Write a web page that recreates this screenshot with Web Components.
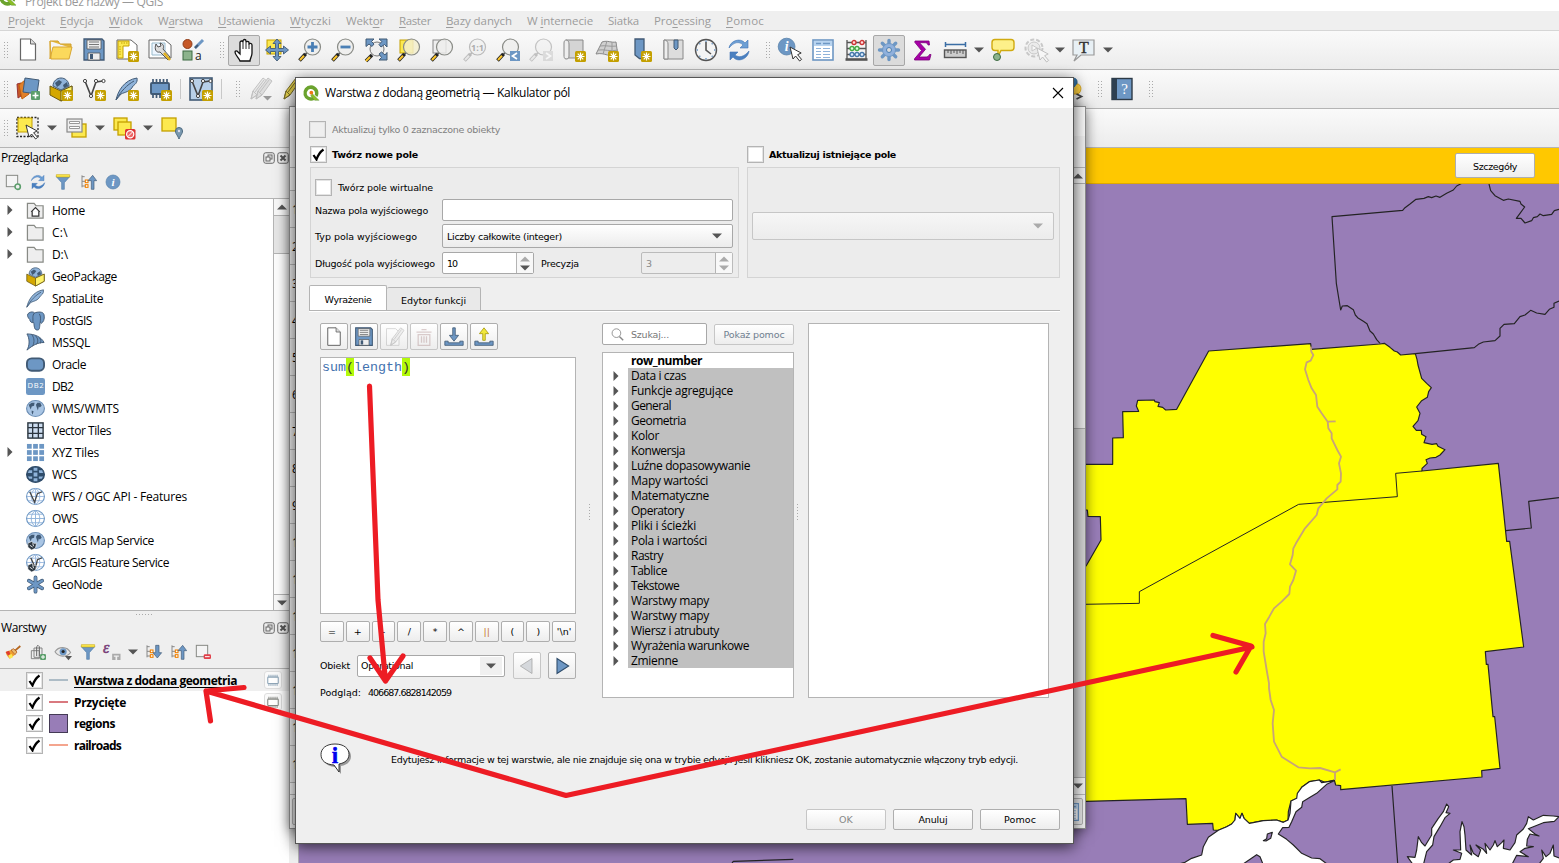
<!DOCTYPE html>
<html lang="pl">
<head>
<meta charset="utf-8">
<title>QGIS</title>
<style>
html,body{margin:0;height:100%;overflow:hidden;background:#efefef}
body{font:12px "Open Sans","Noto Sans",sans-serif;color:#000}
</style>
</head>
<body>
<qgis-app></qgis-app>
<script>
const B='#6d97c4', D='#415a75', Y='#fce94f', G='#c4a000', K='#555753';
const star=`<rect x="13" y="13" width="11" height="11" rx="1.5" fill="#c4a000"/><path d="M18.500 14.500v8M14.500 18.500h8M15.700 15.700l5.600 5.600M21.300 15.700l-5.600 5.600" stroke="#fff" stroke-width="1.200"/>`;
const mag=(inner='',c='#555753',h='#fcc62c')=>`<path d="M9 14.500l-2 2.500" stroke="${c}" stroke-width="2"/><path d="M7.500 16L1.500 22.500" stroke="${c==='#555753'?'#222':c}" stroke-width="3.600"/><path d="M6 17.800L2 22" stroke="${h}" stroke-width="2"/><circle cx="14.500" cy="9" r="8" fill="#eeeeecd0" stroke="${c==='#555753'?'#888a85':c}" stroke-width="1.200"/>${inner}`;
const globe=(f,s)=>`<ellipse cx="10" cy="10" rx="9.400" ry="8.400" fill="${f}" stroke="${s}" stroke-width="1.200"/>`;
const grat=(s,w=1)=>`<path d="M1 10h18M2.500 5.500h15M2.500 14.500h15M10 1.500v17M10 1.500c-6 4-6 13 0 17M10 1.500c6 4 6 13 0 17" fill="none" stroke="${s}" stroke-width="${w}"/>`;
const land=`<path d="M3 6l3-2 3 0-.5 3-2.500 1-1 3-1.500-3zM12 4l3 0 1.500 3-2 2-1-1-1 4-1.500-4-.5-2zM6 12l2 1-1 3.500-1-2z" fill="#415a75"/>`;
const box=`<path d="M1 9l11 5 11-5v9l-11 6-11-6z" fill="#d4a700" stroke="#6b5a14"/><path d="M12 14l11-5v9l-11 6z" fill="#fff36b" stroke="#6b5a14"/><path d="M4 9C4 4 8 1 12 1s8 3 8 8l-8 4z" fill="#8fb3da" stroke="#415a75"/><path d="M6 6l4-3 3 2-2 3-3 2zM14 8l4-3 1 4-4 2z" fill="#415a75"/>`;
const feather=`<path d="M1 23C3 14 9 3 22 1c1 5-3 7-4 8-3 6-8 6-12 8-2 2-3 4-5 6z" fill="#8fb3da" stroke="#415a75"/><path d="M1 23C6 14 12 8 19 4" fill="none" stroke="#415a75"/>`;
const cursor=(x,y,c='#333')=>`<path transform="translate(${x} ${y})" d="M0 0l3 12 2.600-3 4 5 2-1.600-4-4.700 3.600-1.700z" fill="#fff" stroke="${c}"/>`;
const vee=`<path d="M3 4l6 15 5-14 7-1" fill="none" stroke="#444" stroke-width="1.600"/><g fill="#fff" stroke="#444"><circle cx="3" cy="4" r="1.600"/><circle cx="9" cy="19" r="1.600"/><circle cx="14" cy="4" r="1.600"/><circle cx="21.500" cy="4" r="1.600"/></g>`;
const folder=`<path d="M1.500 2.500h7l2 2.500h7.500v13h-16.500z" fill="#eee" stroke="#888a85" stroke-width="1.300"/>`;
const cyc=`<path d="M2 10C3 3 13-1 18 5l3-3v8h-8l3-3C12 3 7 4 2 10z" fill="#6d9fd4" stroke="#3f73b5" stroke-width=".6"/><path d="M22 13C21 21 11 25 6 19l-3 3v-8h8l-3 3c4 3 9 2 14-4z" fill="#4a80c0" stroke="#3f73b5" stroke-width=".6"/>`;
const pen=(c,d)=>`<path d="M3 22l2-8L15 1l4 3L9 18z" fill="${c}" stroke="${d}"/><path d="M3 22l2-8 4 4zM7 15L16 3" fill="none" stroke="${d}"/>`;
const tree=`<path d="M3 2v18M3 4h4M3 18h5M3 11h5" stroke="#888" stroke-width="1.500" fill="none"/><g fill="#fff" stroke="#f08000" stroke-width="1.600"><rect x="8" y="9" width="4" height="4"/><rect x="8" y="16" width="4" height="4"/></g>`;
const disk=`<path d="M2 1h18l2 2v19H2z" fill="#6d97c4" stroke="#415a75" stroke-width="1.300"/><path d="M5 2h14v9H5zM6 15h12v7H6z" fill="#eee" stroke="#555" stroke-width=".8"/><path d="M7 4h10M7 6.500h10M7 9h10" stroke="#777"/><rect x="8" y="16" width="3" height="5" fill="#415a75"/>`;
const page=`<path d="M4.500 1h10l5 5v16H4.500z" fill="#fff" stroke="#666" stroke-width="1.200"/><path d="M14.500 1v5h5" fill="#ddd" stroke="#666"/>`;
const funnel=`<path d="M2 4h20l-8 9v10h-4V13z" fill="#6d97c4" stroke="#5580aa"/><path d="M2 1h20v3.500H2z" fill="#fce94f" stroke="#c4a000" stroke-width=".8"/>`;
const chip=(c,f)=>`<rect x="3" y="7" width="18" height="11" rx="1" fill="${f}" stroke="${c}" stroke-width="1.900"/><path d="M5 3v4M8.500 3v4M12 3v4M15.500 3v4M19 3v4M5 18v4M8.500 18v4M12 18v4M15.500 18v4M19 18v4" stroke="${c}" stroke-width="1.700"/>`;
const info=`<circle cx="12" cy="12" r="10.500" fill="#6d97c4" stroke="#5580aa"/><text x="12" y="18" font-size="17" font-style="italic" font-weight="bold" fill="#fff" text-anchor="middle" font-family="Liberation Serif,serif">i</text>`;
const arcs=`<path d="M2 13l4-2 2 2 3 0-1 5-4 2-4-3z" fill="#2c3640" stroke="#fff" stroke-width=".6"/><path d="M4 15l3 2M7 13l1 3" stroke="#fff" stroke-width=".9"/>`;
const I={
new:page, open:`<path d="M1 3h8l2 3h11v4" fill="#e5b83c" stroke="#d09f2c"/><path d="M1 3v18l3-12h19l-3 12H2z" fill="#fbd95c" stroke="#d8a632"/>`,
save:disk,
layout:`<path d="M2 2h14l6 5v14H2z" fill="#fff" stroke="#666"/><path d="M3 3h11v5H8v12H3z" fill="#fce94f" stroke="#c4a000"/><path d="M6 5h7M5 8v10" stroke="#c4a000" stroke-dasharray="1.500 1"/>${star}`,
layman:`<path d="M1 2h16l6 5v13H1z" fill="#fff" stroke="#666"/><path d="M4 5h13v12H4z" fill="#eef6ff" stroke="#9bc"/><path d="M8 6l2 3 3-1-1-3c4 1 4 4 3 6l7 8-2 3-8-8c-4 1-6-3-4-8z" fill="#ddd" stroke="#444" stroke-width=".9"/><path d="M16 15l6 7" stroke="#e0b020" stroke-width="2.600"/>`,
style:`<circle cx="6.500" cy="6" r="4.500" fill="#c65827" stroke="#8f3c18"/><path d="M14 10l8-8" stroke="#6d97c4" stroke-width="3"/><path d="M14 10l3-3" stroke="#415a75" stroke-width="2"/><rect x="2" y="13" width="9" height="9" fill="#8cb38c" stroke="#3d6b42"/><text x="14" y="21.500" font-size="12" fill="#222" font-family="Open Sans,sans-serif">a</text>`,
hand:`<path d="M8 23c-1-3-5-6-5-9 0-1.500 2-1.500 3 0l2 2V4.500C8 2.500 11 2.500 11 4.500V3c0-2 3-2 3 0v1.500c0-1.500 3-1.500 3 0V6.500c0-1.500 3-1.500 3 .500v8c0 4-2 5-2 8z" fill="#fff" stroke="#111" stroke-width="1.300"/><path d="M11 4.500V11M14 4.500V11M17 6V11" stroke="#111" stroke-width=".9"/>`,
pansel:`<rect x="2" y="2" width="14" height="14" fill="${Y}" stroke="${G}"/><path d="M12 1l4 4.500h-2.500v5h5V8l5 4-5 4v-2.500h-5v5H16L12 23l-4-4.500h2.500v-5h-5V16l-5-4 5-4v2.500h5v-5H8z" fill="${B}" stroke="${D}" stroke-width=".9"/>`,
zin:mag(`<path d="M14.500 4v10M9.500 9h10" stroke="#4a7fb5" stroke-width="2.800"/>`),
zout:mag(`<path d="M9.500 9h10" stroke="#4a7fb5" stroke-width="2.800"/>`),
zfull:`<circle cx="13" cy="11" r="7" fill="#eee" stroke="#777"/><path d="M8 17l-6 6" stroke="#222" stroke-width="3.500"/><path d="M6 19l-4 4" stroke="#fcc62c" stroke-width="2"/><path d="M2 1h8L7.500 3.500 10 6 8 8.500 5 6 2 8.500zM23 1v8l-2.500-2.500L17 9l-2-2.500L18 3.500 15 1zM23 22h-8l2.500-2.500L15 16l2.500-2L21 17l2-2.500z" fill="${B}" stroke="${D}"/>`,
zsel:`<rect x="3" y="2" width="13" height="13" fill="${Y}" stroke="${G}"/>`+mag('').replace('#eeeeecd0','#f3efccd8'),
zlay:`<rect x="3" y="2" width="13" height="13" fill="#eee" stroke="#888"/>`+mag(),
z11:`<g opacity=".45">${mag(`<text x="14.500" y="13" font-size="9" font-weight="bold" text-anchor="middle" fill="#555" font-family="Open Sans,sans-serif">1:1</text>`,'#777','#ddd')}</g>`,
zlast:mag()+`<rect x="14" y="13" width="10" height="10" fill="${B}"/><path d="M21 15l-4.500 3 4.500 3" fill="none" stroke="#fff" stroke-width="1.700"/>`,
znext:`<g opacity=".4">${mag('','#777','#ddd')}<rect x="14" y="13" width="10" height="10" fill="#bbb"/><path d="M17 15l4.500 3-4.500 3" fill="none" stroke="#fff" stroke-width="1.700"/></g>`,
map:`<path d="M4 2h17v18H5z" fill="#d4d4d4" stroke="#888"/><path d="M4 2c2 0 3 2 3 4v12c0 2-1 3-3 3s-2-3-2-3V5c0-2 1-3 2-3z" fill="#eee" stroke="#888"/>${star}`,
mesh:`<path d="M7 4c6-2 9 1 14 0l2 14c-8 2-13-4-22-2z" fill="#d0d0d0" stroke="#888"/><path d="M5 8c6-1 10 1 17 0M3 12c7-1 12 2 20 0M12 3L8 16M17 4v13" stroke="#999" fill="none"/>${star}`,
bm:`<path d="M7 1h9v20l-4.500-.5L7 17z" fill="${B}" stroke="${D}" stroke-width="1.300"/>${star}`,
bms:`<path d="M3 2h19v19H3z" fill="#ddd" stroke="#888"/><path d="M3 2c3 0 4 2 4 4v15H3z" fill="#eee" stroke="#888"/><path d="M13 2h4v8l-2 2-2-2z" fill="${B}" stroke="${D}"/>`,
clock:`<circle cx="12" cy="12" r="10.500" fill="#f4f4f4" stroke="#555" stroke-width="1.400"/><path d="M12 4v8l5 4" fill="none" stroke="#555" stroke-width="1.600"/><g stroke="#6d97c4" stroke-width="1.400"><path d="M12 2.500v1.500M12 20v1.500M2.500 12H4M20 12h1.500M5.300 5.300l1 1M17.700 17.700l1 1M5.300 18.700l1-1M17.700 6.300l1-1"/></g>`,
refresh:cyc, ident:`<g transform="translate(-1 -1) scale(.8)">${info}</g>${cursor(12,9)}`,
table:`<rect x="2" y="2" width="20" height="20" fill="#fff" stroke="${B}" stroke-width="1.600"/><path d="M3 3h18v5H3z" fill="#b8d4f0"/><path d="M5 5.500h5M12 5.500h7" stroke="${B}" stroke-width="1.600"/><path d="M5 10.500h5M12 10.500h7M5 13.500h5M12 13.500h7M5 16.500h5M12 16.500h7M5 19.500h5M12 19.500h7" stroke="#8fb3da" stroke-width="1.200"/>`,
abacus:`<path d="M3 2v19M22 2v19M3 4.500h19M3 10.500h19M3 16.500h19" stroke="#555" stroke-width="1.300"/><path d="M1.500 21.500h22" stroke="#555" stroke-width="2.600"/><g stroke-width="1.300"><g fill="#fdd" stroke="#c33"><circle cx="10" cy="4.500" r="2"/><circle cx="18" cy="4.500" r="2"/></g><g fill="#dfd" stroke="#4a4"><circle cx="8" cy="10.500" r="2"/><circle cx="13" cy="10.500" r="2"/></g><g fill="#def" stroke="#47a"><circle cx="8" cy="16.500" r="2"/><circle cx="13" cy="16.500" r="2"/><circle cx="18" cy="16.500" r="2"/></g></g>`,
gear:`<g stroke="#6d97c4" stroke-width="3.400" stroke-linecap="round"><path d="M12 2.500v19M2.500 12h19M5.300 5.300l13.400 13.400M5.300 18.700L18.700 5.300"/></g><circle cx="12" cy="12" r="6.500" fill="#8fb0dc" stroke="#6d97c4"/><circle cx="12" cy="12" r="2.500" fill="#dcdcdc" stroke="#4a7fb5"/>`,
sigma:`<path d="M5 3h14l.5 4h-1.500c-.5-2-1-2.300-4-2.300H9.500l6 6.600L9 19h6c3 0 3.500-.5 4.500-2.500H21L19.500 22H4.500v-1.200l7-8.300L4.800 4.300z" fill="#a800a8" stroke="#7a007a" stroke-width=".8"/>`,
ruler:`<path d="M2 6.500h21M2.500 4v5M22.500 4v5" stroke="#3b6ea5" stroke-width="1.500"/><rect x="1.500" y="12" width="21.500" height="7.500" fill="#ccc" stroke="#555" stroke-width="1.400"/><path d="M5 12v3M8 12v4M11 12v3M14 12v4M17 12v3M20 12v4" stroke="#555"/>`,
tip:`<path d="M4 1.500h16q3 0 3 3v5q0 3-3 3H10l-3 6v-6H4q-3 0-3-3v-5q0-3 3-3z" fill="#fdf08a" stroke="#d0aa10" stroke-width="1.400"/><circle cx="6" cy="19" r="3.500" fill="#8cb38c" stroke="#3d6b42"/>`,
action:`<g opacity=".4"><circle cx="10" cy="10" r="8.500" fill="none" stroke="#888" stroke-width="2" stroke-dasharray="4 2"/><circle cx="10" cy="10" r="6" fill="#ddd" stroke="#888"/><path d="M8 7l5 3-5 3z" fill="#fff" stroke="#888"/>${cursor(13,10,'#777')}</g>`,
text:`<path d="M1 2h21v15H9l-7 6 3-6H1z" fill="#e8f0f5" stroke="#999" stroke-width="1.200"/><text x="12" y="15" font-size="16" text-anchor="middle" fill="#333" stroke="#333" stroke-width=".4" font-family="Liberation Serif,serif">T</text>`,
dsm:`<path d="M1 7l4-1v13l-3 2z" fill="#c65827" stroke="#933"/><path d="M3 8l6-5 4 14-7 5z" fill="#e0802a" stroke="#c4600a"/><path d="M9 1l14 2-2 14-14-2z" fill="${B}" stroke="${D}"/><rect x="15" y="14" width="9" height="9" rx="1" fill="#5b9e6b"/><path d="M19.500 15.500v6M16.500 18.500h6" stroke="#fff" stroke-width="1.600"/>`,
gpkg:box, gpkgn:box+star, shp:vee+star, spl:feather, spln:feather+star, mem:`<g transform="translate(0 -1)">${chip(D,B)}</g>`+star,
virt:`<rect x="1" y="1" width="22" height="22" fill="#b8d0e8" stroke="${D}" stroke-width="1.600"/>${vee}${star}`,
pens:`<g opacity=".55">${pen('#ddd','#999')}<g transform="translate(5 0)">${pen('#ccc','#999')}</g></g><path d="M15 19h9l-4.500 4.500z" fill="#999"/>`,
pen:pen('#e8d44d','#776c2a'),
python:`<path d="M12 1c6 0 6 2 6 5v4H8c-3 0-3 3-3 5" fill="#3471a3" stroke="#245a86"/><path d="M18 7c5 0 5 8 1 10h-9" fill="#ffd140" stroke="#d8a720"/><path d="M17.500 17l5 2.500-5 2.500" fill="none" stroke="#444" stroke-width="1.700"/>`,
help:`<rect x="2" y="1.500" width="20" height="21" fill="${B}" stroke="#2d3a46" stroke-width="1.400"/><rect x="2" y="1.500" width="5" height="21" fill="#2d3f50"/><text x="14.500" y="17" font-size="15" text-anchor="middle" fill="#fff" font-family="Liberation Serif,serif">?</text>`,
sel:`<rect x="1" y="1.500" width="21" height="19" fill="#eee" stroke="#222" stroke-width="1.300" stroke-dasharray="2 1.500"/><rect x="2" y="2" width="14" height="14" fill="${Y}" stroke="${G}"/>${cursor(10,9)}`,
selform:`<rect x="8" y="8" width="14" height="13" fill="${Y}" stroke="${G}" stroke-width="1.300"/><rect x="3" y="3" width="15" height="13" fill="#eee" stroke="#888" stroke-width="1.200"/><path d="M5.500 5.500h10v2h-10zM5.500 10.500h10v2h-10z" fill="#fff" stroke="#999"/>`,
desel:`<rect x="2" y="2" width="13" height="12" fill="${Y}" stroke="${G}" stroke-width="1.300"/><rect x="6" y="6" width="13" height="13" fill="${Y}" stroke="${G}" stroke-width="1.300"/><rect x="13" y="13" width="10.500" height="10.500" rx="1.500" fill="#d33"/><circle cx="18.200" cy="18.200" r="3.600" fill="#e66" stroke="#fff" stroke-width="1.200"/><path d="M15.800 20.700l4.800-4.800" stroke="#fff"/>`,
selloc:`<rect x="2" y="2" width="14" height="13" fill="${Y}" stroke="${G}" stroke-width="1.300"/><path d="M19 23c-2-5-3.500-5-3.500-8a3.500 3.500 0 0 1 7 0c0 3-1.500 3-3.500 8z" fill="#7a99b0" stroke="#4d6a80"/><circle cx="19" cy="15" r="1.200" fill="#dde"/>`,
add:`<rect x="2" y="2" width="17" height="17" fill="#f4f4f4" stroke="#888a85" stroke-width="1.500"/><circle cx="19" cy="19" r="4" fill="#eee" stroke="#5b9e6b" stroke-width="2.400"/>`,
filter:funnel, collapse:tree+`<path d="M17 23V10h-5l7-8 6 8h-4v13z" fill="${B}" stroke="${D}"/>`, expand:tree+`<path d="M16 2v11h-4l6.500 8 6.500-8h-4V2z" fill="${B}" stroke="${D}"/>`, info,
home:folder+`<path d="M5.500 11.500L10 7l4.500 4.500M6.500 11v5h7v-5" fill="#fff" stroke="#333" stroke-width="1.300"/>`, folder,
pg:`<path d="M2 3c3-3 6-2 7-1 3-1 9-2 10 2 1 5-1 8-3 9l-1-1c-1 4 0 8-3 8-4 0-3-5-4-8-2 1-4-1-4-3-2-2-3-4-2-6z" fill="${B}" stroke="${D}"/><path d="M9 2c-3 3-1 7-2 10M14 3c2 3 1 6 1 9" stroke="${D}" fill="none"/>`,
ms:`<path d="M1 1c8 0 15 3 18 9C12 10 7 13 1 18c3-5 3-12 0-17z" fill="${B}" stroke="${D}"/><path d="M6 1.500c3 4 3 8 1 12.500M10 3c3 3 3 6 1 9M14 5c2 2 2 4 1 6" fill="none" stroke="${D}"/>`,
ora:`<rect x="1" y="3.500" width="18" height="13" rx="5" fill="${B}" stroke="${D}" stroke-width="2"/>`,
db2:`<rect x="0" y="1" width="20" height="18" rx="2.500" fill="${B}"/><text x="10" y="11.500" font-size="8" fill="#fff" text-anchor="middle" font-family="Open Sans,sans-serif" textLength="17">DB2</text>`,
wms:globe('#a9c5e4','#6d8fb5')+land,
vt:`<rect x="2" y="2" width="16" height="16" fill="#cdddf0" stroke="#2c3640" stroke-width="1.500"/><path d="M7 2v16M13 2v16M2 7h16M2 13h16" stroke="#2c3640" stroke-width="1.400"/>`,
xyz:[1,7.500,14].map(y=>[1,7.500,14].map(x=>`<rect x="${x}" y="${y}" width="5" height="5" fill="${B}"/>`).join('')).join(''),
wcs:globe('#2f4c6a','#2f4c6a')+`<path d="M3 5.500h3.500v3H2zM8 8h4v4H8zM13.500 5.500h3.500l1 3h-4zM2 12h4.500v2.500H3.500zM13.500 12H18l-1.500 2.500h-3zM8 3h4v3H8zM8 14h4v3H8z" fill="#8fb3da"/>`,
wfs:globe('#fff','#6d97c4')+grat('#9fbce0')+`<path d="M4 5l5 11 3-9 5-2" fill="none" stroke="#444" stroke-width="1.400"/>`,
ows:globe('#fff','#6d97c4')+grat('#8fb3da'),
ams:globe('#a9c5e4','#6d8fb5')+land+arcs, afs:globe('#fff','#6d97c4')+grat('#9fbce0')+`<path d="M5 5l5 11 2-9 5-2" fill="none" stroke="#444" stroke-width="1.400"/>`+arcs,
gn:`<g stroke="${D}" stroke-width="4" stroke-linecap="round"><path d="M10 2.500v15M3 6l14 8M17 6L3 14"/></g><g stroke="${B}" stroke-width="2.600" stroke-linecap="round"><path d="M10 2.500v15M3 6l14 8M17 6L3 14"/></g>`,
brush:`<path d="M1 12l8-3 6 7-8 6c-3-3-5-5-6-10z" fill="#f0a030"/><path d="M1 12l5-2 2 5-3 3z" fill="#e03c31"/><path d="M5 17l5-2 2 5-5 2z" fill="#fce94f"/><path d="M9 9l4-2 5 5-3 4z" fill="#e9b96e" stroke="#a40"/><path d="M15 10l8-7" stroke="#b5651d" stroke-width="2.600"/>`,
group:`<path d="M6 6h12v14H6zM2 10h12v12H2z" fill="#eee" stroke="#777" stroke-width="1.300"/><path d="M10 18V4q2-4 4 0v14" stroke="#666" fill="none" stroke-width="1.500"/><rect x="15" y="15" width="9" height="9" rx="2" fill="#5b9e6b"/><path d="M19.500 16.500v6M16.500 19.500h6" stroke="#fff" stroke-width="1.500"/>`,
eye:`<path d="M0 11c5-8 17-8 22 1-5 7-17 7-22-1z" fill="#e8e8e8" stroke="#999" stroke-width="1.500"/><circle cx="11.500" cy="11" r="5" fill="${B}"/><circle cx="11.500" cy="10.500" r="2.200" fill="#222"/><path d="M14 17h10l-5 6z" fill="#555"/>`,
eps:`<text x="-3" y="13" font-size="24" font-style="italic" fill="#7a3f7a" stroke="#7a3f7a" stroke-width=".8" font-family="Liberation Serif,serif">ε</text><path d="M12 24v-8h10v8M14.500 24v-5M19.500 24v-5" fill="none" stroke="#aaa" stroke-width="2.500"/>`,
remove:`<rect x="2" y="2" width="17" height="17" fill="#f4f4f4" stroke="#888a85" stroke-width="1.500"/><rect x="13" y="15.500" width="11" height="7" rx="2" fill="#e0404a"/><path d="M15 19h7" stroke="#fff" stroke-width="1.500"/>`,
edit:`<g opacity=".35"><path d="M3 2h11l4 4v16H3z" fill="#fff" stroke="#888"/><g transform="translate(5 0)">${pen('#ddd','#777')}</g></g>`,
trash:`<g opacity=".4" fill="none" stroke="#a88" stroke-width="1.500"><path d="M3 6h18M9 3h6M5 9h14v13H5zM9 11v8M12 11v8M15 11v8"/></g>`,
imp:`<path d="M10.500 1h3v9h4l-5.500 7-5.500-7h4z" fill="${B}" stroke="${D}"/><path d="M1 17h4v2h14v-2h4v5H1z" fill="${B}" stroke="${D}"/>`,
exp:`<path d="M10.500 16h3V8h4L12 1 6.500 8h4z" fill="#f0e83c" stroke="#a99a10"/><path d="M1 17h4v2h14v-2h4v5H1z" fill="${B}" stroke="${D}"/>`,
prev:`<path d="M18 3v18L4 12z" fill="#d5d8dc" stroke="#aaa"/>`, next:`<path d="M6 3v18l14-9z" fill="${B}" stroke="#2f4c6a" stroke-width="1.300"/>`,
search:`<circle cx="10" cy="9.500" r="8" fill="none" stroke="#888" stroke-width="1.600"/><path d="M15.500 15.500l7 7" stroke="#888" stroke-width="2.600"/>`,
qgis:`<path d="M12 .5a11.500 11.500 0 1 0 5.500 21.600l-3.500-4A6.200 6.200 0 1 1 18 12c0 1-.1 1.800-.5 2.500l4 3.500A11.500 11.500 0 0 0 12 .5z" fill="#6ba32e"/><path d="M14 13l10 10h-6.500L11.500 16z" fill="#8cbf26" stroke="#4e8a2a" stroke-width=".6"/><circle cx="12.500" cy="11.500" r="2.800" fill="#ee7913"/>`,
chipb:chip('#8fa6b8','#fff'), chipg:chip('#888a85','#fff'),
float:`<rect x="1.500" y="1.500" width="21" height="21" rx="4" fill="#eee" stroke="#666" stroke-width="2"/><rect x="10" y="6" width="8" height="8" fill="none" stroke="#666" stroke-width="2"/><rect x="6" y="10" width="8" height="8" fill="#eee" stroke="#666" stroke-width="2"/>`,
close:`<rect x="1.500" y="1.500" width="21" height="21" rx="4" fill="#eee" stroke="#666" stroke-width="2"/><path d="M7 7l10 10M17 7L7 17" stroke="#555" stroke-width="4"/>`,
bubble:`<path d="M17 3c9 0 14 4.500 14 10.500 0 5-4 8.500-10 9.500v8l-6-7C8 23.500 3 20 3 13.500 3 7.500 8 3 17 3z" fill="#999"/><path d="M15 1c9 0 14 4.500 14 10.500 0 5-4 8.500-10 9.500v8l-5-7C6 21.500 1 18 1 11.500 1 5.500 6 1 15 1z" fill="#fff" stroke="#222" stroke-width=".9"/><text x="15" y="20" font-size="23" font-weight="bold" text-anchor="middle" fill="#00e" stroke="#00e" stroke-width=".5" font-family="Liberation Serif,serif">i</text>`
};
const vb={home:20,folder:20,pg:20,ms:20,ora:20,db2:20,wms:20,vt:20,xyz:20,wcs:20,wfs:20,ows:20,ams:20,afs:20,gn:20,bubble:32};
function define(name,css,html,up){
  const t=document.createElement('template');
  customElements.define(name,class extends HTMLElement{
    connectedCallback(){
      if(this.shadowRoot)return;
      const r=this.attachShadow({mode:'open'});
      t.innerHTML=`<style>*{box-sizing:border-box}:host{box-sizing:border-box}${css}</style>`+(typeof html==='function'?html(this):html);
      r.append(t.content.cloneNode(true));
      up&&up(this,r);
    }
  });
}
const a=(e,n,d='')=>e.getAttribute(n)??d;
/* label whose tracking is adjusted to fill the given width */
define('ui-text',':host{display:inline-block;white-space:pre;flex:none}span{display:inline-block}','<span><slot></slot></span>',(e,r)=>{
  const w=+a(e,'w',0); if(!w)return;
  const s=r.querySelector('span'),n=e.textContent.length;
  s.style.letterSpacing=((w-s.getBoundingClientRect().width)/n).toFixed(3)+'px'; e.style.width=w+'px';
});
define('ui-icon',':host{display:block;flex:none}svg{display:block;overflow:visible}',e=>{const s=a(e,'s','24'),v=vb[a(e,'n')]||24;return `<svg width="${s}" height="${s}" viewBox="0 0 ${v} ${v}">${I[a(e,'n')]||''}</svg>`});
define('ui-caret',':host{display:grid;place-items:center;flex:none;width:15px;color:#555}',e=>{const d=a(e,'d','down');return `<svg width="10" height="10" viewBox="0 0 10 10"><path d="${d==='down'?'M0 2.500h10L5 7.500z':d==='up'?'M0 7.500h10L5 2.500z':'M2.500 0v10l5-5z'}" fill="currentColor"/></svg>`});
define('tool-cell',':host{display:grid;place-items:center;width:33px;height:32px;flex:none}:host([on]) div{background:#dcdcdc;border:1px solid #a8a8a8;border-radius:2px;width:32px;height:31px;display:grid;place-items:center}',e=>`<div><ui-icon n="${a(e,'n')}" s="${a(e,'s','24')}"></ui-icon></div>`);
define('tool-grip',':host{display:grid;place-items:center;flex:none;height:100%;padding-left:6px}div{width:5px;height:18px;background:radial-gradient(circle,#aaa 0 .6px,transparent 1px) 0 0/3px 3px}','<div></div>');
define('tool-sep',':host{display:block;flex:none;width:4px;margin-left:4px;height:20px;border-left:1px solid #c8c8c8}','');
define('tool-bar',':host{display:flex;align-items:center;background:linear-gradient(#fafafa,#ececec);border-bottom:1px solid #b4b4b4;position:relative}','<slot></slot>');
define('menu-bar',':host{display:flex;gap:15px;align-items:center;height:20px;padding:0 0 1px 8px;background:#efefef;border-bottom:1px solid #d6d6d6;color:#9c9c9c;font-size:11.500px}u{text-underline-offset:2px}',
 ()=>[['<u>P</u>rojekt',37],['<u>E</u>dycja',34],['<u>W</u>idok',34],['W<u>a</u>rstwa',45],['<u>U</u>stawienia',57],['<u>W</u>tyczki',41],['Wekt<u>o</u>r',38],['<u>R</u>aster',32],['<u>B</u>azy danych',66],['W <u>i</u>nternecie',66],['Siatka',31],['Pro<u>c</u>essing',57],['<u>P</u>omoc',38]].map(([t,w])=>`<ui-text w="${w}">${t}</ui-text>`).join(''));
define('ui-check',':host{display:grid;place-items:center;width:17px;height:17px;flex:none;background:#fff;border:1px solid #b4b4b4;box-shadow:inset 0 0 0 1px #e4e4e4}:host([off]){background:#efefef}',e=>e.hasAttribute('on')?'<svg width="13" height="13" viewBox="0 0 13 13"><path d="M1.500 7l3 4.500C6 7 8 4 11.500 1.500" fill="none" stroke="#000" stroke-width="2.200"/></svg>':'');
define('ui-button',':host{display:flex;align-items:center;justify-content:center;flex:none;background:linear-gradient(#fff,#ededed);border:1px solid #aeaeae;border-radius:2px}:host([off]){color:#888;border-color:#c6c6c6}','<slot></slot>');
define('ui-field',':host{display:flex;align-items:center;flex:none;background:#fff;border:1px solid #a8a8a8;border-radius:2px;padding-left:4px}:host([off]){background:#ededed;color:#888;border-color:#bbb}:host([combo]){background:linear-gradient(#fff,#ececec)}:host([combo][off]){background:linear-gradient(#f6f6f6,#ececec);border-color:#c6c6c6}i{flex:1}div{align-self:stretch;width:17px;border-left:1px solid #b4b4b4;display:flex;flex-direction:column;justify-content:center;align-items:center;background:#f8f8f8}ui-caret{height:9px}.f{height:auto;width:30px;align-self:stretch}.m{background:#f0f0f0;margin:1px 2px;width:22px}.up{color:#aaa}',
 e=>'<slot></slot><i></i>'+(e.hasAttribute('spin')?`<div><ui-caret d="up" class="up"></ui-caret><ui-caret class="${e.hasAttribute('off')?'up':''}"></ui-caret></div>`:e.hasAttribute('arrow')?`<ui-caret class="f ${e.hasAttribute('off')?'up':''} ${e.hasAttribute('m')?'m':''}"></ui-caret>`:''));
define('dock-title',':host{display:flex;align-items:center;gap:2px;padding:0 0 1px 1px;height:20px}i{flex:1}',e=>`<ui-text w="${a(e,'w')}">${a(e,'t')}</ui-text><i></i><ui-icon n="float" s="12"></ui-icon><ui-icon n="close" s="12"></ui-icon>`);
define('scroll-bar',':host{display:flex;flex-direction:column;width:16px;border-left:1px solid #b4b4b4;background:#fdfdfd}ui-caret{height:16px;width:15px;background:#f8f8f8}b{display:block;background:#e6e6e6;border:solid #b4b4b4;border-width:1px 0}i{flex:1}',e=>`<ui-caret d="up"></ui-caret><b style="height:39px"></b><i></i><ui-caret style="border-top:1px solid #b4b4b4"></ui-caret>`);
const T=[['home','Home',33,1],['folder','C:\\',16,1],['folder','D:\\',16,1],['gpkg','GeoPackage',65],['spl','SpatiaLite',51],['pg','PostGIS',40],['ms','MSSQL',38],['ora','Oracle',34],['db2','DB2',21],['wms','WMS/WMTS',67],['vt','Vector Tiles',59],['xyz','XYZ Tiles',47,1],['wcs','WCS',25],['wfs','WFS / OGC API - Features',135],['ows','OWS',26],['ams','ArcGIS Map Service',102],['afs','ArcGIS Feature Service',117],['gn','GeoNode',50]];
define('browser-panel',':host{display:flex;flex-direction:column;height:463px}nav{display:flex;gap:9px;height:30px;align-items:center;padding:0 0 2px 5px}section{display:flex;height:413px;background:#fff;border:solid #b4b4b4;border-width:1px 0}main{flex:1}.r{display:flex;height:22px;align-items:center}.r ui-icon{margin:0 7px 0 6px}.r ui-caret{width:20px}.r b{width:20px}',
 ()=>`<dock-title t="Przeglądarka" w="67"></dock-title><nav>${['add','refresh','filter','collapse','info'].map(n=>`<ui-icon n="${n}" s="16"></ui-icon>`).join('')}</nav><section><main>${T.map(([i,t,w,c])=>`<div class="r">${c?'<ui-caret d="right"></ui-caret>':'<b></b>'}<ui-icon n="${i}" s="19"></ui-icon><ui-text w="${w}">${t}</ui-text></div>`).join('')}</main><scroll-bar></scroll-bar></section>`);
define('layers-panel',':host{display:flex;flex-direction:column;flex:1}nav{display:flex;height:30px;align-items:center;padding:0 0 2px 5px;gap:9px}section{flex:1;background:#fff;border-top:1px solid #b4b4b4;font-weight:bold}.r{display:flex;height:22px;align-items:center;padding-left:26px}.r.s{background:#efefef}u{text-underline-offset:2px}.sw{width:19px;height:2px;margin:0 6px}.sq{height:19px;border:1px solid #443a55}i{flex:1}.c{border:1px solid #ddd;border-radius:3px;width:18px;height:18px;margin-right:7px;display:grid;place-items:center;background:#fafafa}',
 ()=>`<dock-title t="Warstwy" w="45"></dock-title><nav><ui-icon n="brush" s="16"></ui-icon><ui-icon n="group" s="16"></ui-icon><ui-icon n="eye" s="17"></ui-icon><ui-icon n="filter" s="16" style="margin-left:-1px"></ui-icon><ui-icon n="eps" s="16"></ui-icon><ui-caret style="margin-left:-5px"></ui-caret><ui-icon n="expand" s="16" style="margin-left:-4px"></ui-icon><ui-icon n="collapse" s="16"></ui-icon><ui-icon n="remove" s="16"></ui-icon></nav><section>
 <div class="r s"><ui-check on></ui-check><span class="sw" style="background:#adbcc6"></span><ui-text w="163"><u>Warstwa z dodana geometria</u></ui-text><i></i><span class="c"><ui-icon n="chipb" s="14"></ui-icon></span></div>
 <div class="r"><ui-check on></ui-check><span class="sw" style="background:#d9797f"></span><ui-text w="52">Przycięte</ui-text><i></i><span class="c"><ui-icon n="chipg" s="14"></ui-icon></span></div>
 <div class="r" style="margin:-1px 0 0"><ui-check on></ui-check><span class="sw sq" style="background:#987db7"></span><ui-text w="41">regions</ui-text></div>
 <div class="r"><ui-check on></ui-check><span class="sw" style="background:#f4a58e"></span><ui-text w="47">railroads</ui-text></div></section>`);
define('map-canvas',':host{display:block;background:#987db7}svg{display:block}',`<svg width="1260" height="679" viewBox="-2283 102 3780 2037"><g stroke="#232323" stroke-width="3.500" stroke-linejoin="round" fill="none">
<path fill="#ff0" d="M-100 943H158V864L190 863 188 785 236 784 229 768 233 751 283 750 285 755 298 758 294 769 308 772 317 780 350 778 446 603 752 581 754 598 960 582 973 580 990 592 1003 603 1012 606 1022 615 1066 611 1071 628 1074 645 1085 685 1100 700 1114 713 1106 725 1102 742 1085 752 1070 771 1080 790 1074 812 1059 829 1069 841 1084 841 1085 853 1098 860 1092 878 1116 883 1130 881 1134 889 1155 899 1140 915 1128 922 1110 924 1098 929 1102 940 1086 955V963L1315 940 1327 1050 1340 1174H1349L1391 1491 1276 1505 1279 1543H1284L1299 1700H1304L1320 1855 1265 1862 1266 1881 842 1919V1907L827 1905 823 1890 795 1897 778 1890 748 1895 725 1912 712 1945 693 1953 685 1985 684 2010 670 2017 650 2010 610 2012 568 2020 552 2005 546 1990 540 2005 527 1990 525 2010 515 2022 500 2030 475 2041 460 2040 458 2020 382 2023 378 1946 80 1954H-100z"/>
<path fill="#987db7" d="M-100 1080H82L84 1099 121 1100 123 1170 80 1245 -100 1500z"/>
<path d="M-100 1366L238 1360V1325L716 1063 1012 1040 1007 970 1086 963" stroke-width="3"/>
<path d="M1205 100L1190 108 1180 120 1160 130 1140 142 1128 138 1115 143 1105 140 1092 145 1068 148 1050 162 1035 173 1028 181 816 200 829 400 842 480 847 468 862 467 880 479 886 495 893 503 910 514 921 521 930 543 940 552 950 569 960 580M1287 102L1292 122 1305 137 1330 151 1345 147 1380 154 1383 162 1394 171 1380 190 1369 205 1383 205 1395 219 1415 212 1420 203 1432 200 1440 192 1450 197 1475 193 1483 182 1497 178M1066 611L1243 593 1255 583 1270 576 1305 572 1320 558V535L1332 523 1363 521 1380 500 1395 495 1412 481 1430 489 1455 493 1468 478 1482 472V460L1497 453M1497 1043L1406 1054 1414 1134 1337 1142M996 1908L1013 2139M-984 2139L-980 2134 -800 2128"/>
<path fill="#fff" d="M345 2145L375 2137 395 2125 425 2115 430 2090 445 2062 475 2041 500 2030 515 2022 525 2010 527 1990 540 2005 546 1990 552 2005 568 2020 610 2012 650 2010 670 2017 684 2010 690 1990 693 1953 710 1945 712 1930 725 1912 748 1895 778 1890 785 1898 823 1892 800 1903 770 1930 745 1945 728 1955 725 1972 708 1985 695 2015 687 2032 668 2033 655 2052 680 2068 700 2085 725 2110 755 2124 780 2126 805 2145H610L600 2120 590 2114 545 2145z"/>
<path fill="#987db7" d="M610 2072L620 2066 622 2052 637 2047 632 2065 618 2073z"/>
<path fill="#fff" d="M1160 1962L1166 1970 1158 1988 1170 1990 1155 2003 1140 2030 1122 2060 1118 2085 1100 2105 1090 2145H1060L1042 2120 1065 2122 1070 2100 1075 2060 1085 2078 1095 2088 1115 2055 1115 2035 1135 2005 1150 1985zM1206 2015L1212 2030 1215 2055 1218 2100 1235 2115 1230 2085 1240 2110 1255 2120 1262 2100 1248 2085 1270 2098 1280 2110 1275 2080 1290 2100 1300 2085 1305 2072 1312 2090 1325 2078 1332 2070 1330 2095 1350 2100 1365 2078 1370 2055 1390 2037 1400 2020 1405 2000 1420 2010 1450 1996 1480 1998 1497 2000 1483 2014 1450 2018 1420 2030 1405 2036 1425 2052 1437 2058 1410 2052 1402 2068 1400 2088 1420 2090 1395 2095 1380 2105 1405 2120 1370 2116 1355 2145H1160L1180 2130 1200 2128 1205 2110 1180 2100 1202 2100 1200 2045z"/>
<path fill="#fff" d="M1435 2145L1450 2125 1445 2100 1458 2120 1470 2110 1480 2085 1482 2118 1500 2125V2145z"/>
</g><path d="M752 590L754 605 760 615 752 632 740 637 735 658 745 690 755 715 768 735 772 770 785 790 803 815 827 814M803 815L805 835 815 850V865L832 900 843 920 837 940 843 970 842 995 832 1005V1018L800 1045 775 1075 770 1095 735 1135 708 1180 700 1195 698 1215 690 1243 708 1262 700 1290 690 1310 688 1332 665 1355 642 1375 628 1400 615 1422 617 1450 611 1475 611 1505 620 1560 627 1600V1615L632 1650 642 1680 638 1720 642 1775 665 1820 715 1852 750 1855 780 1854 825 1867 842 1858M825 1867V1890" fill="none" stroke="#c8a478" stroke-width="5.500" stroke-linejoin="round"/></svg>`);
define('attribute-window',':host{position:absolute;left:289px;top:106px;width:797px;height:723px;border:1px solid #8c8c8c;background:#efefef;box-shadow:0 2px 12px #0008;display:flex;flex-direction:column}header{height:29px;background:#f8f8f8}.t{height:32px;border-bottom:1px solid #b4b4b4}main{display:flex;flex:1}.g{width:40px}.r{height:37px;border-bottom:1px solid #b4b4b4;line-height:37px;padding-left:2px;background:#e9e9e9}.h{height:23px;border-bottom:1px solid #b4b4b4}i{flex:1}.s{width:16px;display:flex;flex-direction:column;border-left:1px solid #aaa;background:#e8e8e8;height:626px}.s b{height:350px;background:#d2d2d2;border:solid #aaa;border-width:1px 0}ui-caret{height:16px;background:#eee}ui-caret:first-child{border-bottom:1px solid #aaa}footer{height:34px;border-top:1px solid #b4b4b4;display:flex;justify-content:space-between;padding:3px 2px}ui-button{width:26px;height:27px;background:#e4e4e4}',
 ()=>`<header></header><div class="t"></div><main><div class="g"><div class="h"></div>${Array.from({length:16},(_,i)=>`<div class="r">${i<9?i+1:1}</div>`).join('')}</div><i></i><div class="s"><ui-caret d="up"></ui-caret><i></i><b></b><ui-caret></ui-caret></div></main><footer><ui-button></ui-button><ui-button><ui-icon n="table" s="20"></ui-icon></ui-button></footer>`);
const F=[['Data i czas',55],['Funkcje agregujące',102],['General',40],['Geometria',55],['Kolor',28],['Konwersja',54],['Luźne dopasowywanie',119],['Mapy wartości',77],['Matematyczne',78],['Operatory',53],['Pliki i ścieżki',65],['Pola i wartości',76],['Rastry',32],['Tablice',36],['Tekstowe',48],['Warstwy mapy',78],['Warstwy mapy',78],['Wiersz i atrubuty',88],['Wyrażenia warunkowe',118],['Zmienne',47]];
define('function-tree',':host{display:block;width:192px;height:346px;border:1px solid #b4b4b4;background:#fff}.r{display:flex;height:15px;line-height:15px}.r ui-caret{width:25px}.r div{flex:1;background:#c0c0c0;padding-left:3px;overflow:hidden}.h{height:15px;line-height:15px;font-weight:bold;padding-left:28px}',
 ()=>`<div class="h"><ui-text w="71">row_number</ui-text></div>${F.map(([t,w])=>`<div class="r"><ui-caret d="right"></ui-caret><div><ui-text w="${w}">${t}</ui-text></div></div>`).join('')}`);
define('calc-dialog',`:host{position:absolute;left:295px;top:77px;width:779px;height:767px;border:1px solid #565656;background:#efefef;box-shadow:0 3px 14px #000a;display:flex;flex-direction:column;font:9.500px "DejaVu Sans",sans-serif}
header{height:30px;background:#fff;display:flex;align-items:center;gap:6px;padding:0 9px 1px 7px;font:12px "Open Sans",sans-serif}header i{flex:1}
.body{padding:13px 13px 0;display:flex;flex-direction:column}
.row{display:flex;align-items:center}
.groups{display:grid;grid-template-columns:429px 313px;gap:8px;padding-left:1px;margin-top:3px}
.gh{display:flex;align-items:center;gap:5px;height:24px;margin-bottom:1px;font-weight:bold}
.fr{border:1px solid #d4d4d4;background:#ececec;height:111px;padding:8px 4px 0;display:flex;flex-direction:column}
.tabs{display:flex;align-items:flex-end;height:25px;margin-top:7px}
.tab{display:flex;align-items:center;justify-content:center;border:1px solid #b4b4b4;border-bottom:0;border-radius:2px 2px 0 0;padding-top:3px}
.pane{border-top:1px solid #b4b4b4;box-shadow:inset 0 1px #fff;display:grid;grid-template-columns:256px 26px 192px 14px 241px;column-gap:0;padding:12px 0 0 11px;height:389px}
.ed{height:257px;border:1px solid #b4b4b4;background:#fff;margin-top:7px;font:13.330px/19px "Liberation Mono",monospace;color:#4271ae;padding:0 1px}
.ed mark{background:#b4fa0a;color:#333;display:inline-block;height:18px}
.grip{justify-self:center;margin-top:181px;width:1px;height:16px;background:repeating-linear-gradient(#aaa 0 1px,transparent 1px 3px)}`,
`<header><ui-icon n="qgis" s="16"></ui-icon><ui-text w="245">Warstwa z dodaną geometrią — Kalkulator pól</ui-text><i></i><svg width="12" height="12" viewBox="0 0 12 12"><path d="M1 1l10 10M11 1L1 11" stroke="#000" stroke-width="1.100"/></svg></header>
<div class="body">
<div class="row" style="height:18px;gap:6px;color:#808080;margin-top:-1px;margin-bottom:1px"><ui-check off></ui-check><ui-text w="168">Aktualizuj tylko 0 zaznaczone obiekty</ui-text></div>
<div class="groups"><div><div class="gh"><ui-check on></ui-check><ui-text w="86">Twórz nowe pole</ui-text></div>
<div class="fr"><div class="row" style="height:22px;gap:6px"><ui-check></ui-check><ui-text w="95">Twórz pole wirtualne</ui-text></div>
<div class="row" style="height:24px"><ui-text w="113">Nazwa pola wyjściowego</ui-text><ui-field style="width:291px;height:22px;margin-left:14px"></ui-field></div>
<div class="row" style="height:28px"><ui-text w="102">Typ pola wyjściowego</ui-text><ui-field combo arrow style="width:291px;height:24px;margin-left:25px"><ui-text w="115">Liczby całkowite (integer)</ui-text></ui-field></div>
<div class="row" style="height:26px"><ui-text w="120">Długość pola wyjściowego</ui-text><ui-field spin style="width:92px;height:22px;margin:0 7px"><ui-text w="10">10</ui-text></ui-field><ui-text w="38">Precyzja</ui-text><ui-field spin off style="width:92px;height:22px;margin-left:62px"><ui-text>3</ui-text></ui-field></div></div></div>
<div><div class="gh"><ui-check></ui-check><ui-text w="127">Aktualizuj istniejące pole</ui-text></div><div class="fr" style="padding-top:44px"><ui-field combo arrow off style="width:302px;height:28px"></ui-field></div></div></div>
<div class="tabs"><div class="tab" style="width:78px;height:25px;background:#fff"><ui-text w="47">Wyrażenie</ui-text></div><div class="tab" style="width:94px;height:23px;background:#e9e9e9;border-left:0"><ui-text w="65">Edytor funkcji</ui-text></div></div>
<div class="pane"><div>
<div class="row" style="gap:2px">${['new','save','edit','trash','imp','exp'].map(n=>`<ui-button style="width:28px;height:27px" ${n=='edit'||n=='trash'?'off':''}><ui-icon n="${n}" s="20"></ui-icon></ui-button>`).join('')}</div>
<div class="ed"><span>sum</span><mark>(</mark>length<mark>)</mark></div>
<div class="row" style="gap:2px;margin-top:7px">${['=','+','-','/','*','^','||','(',')',"'\\n'"].map(n=>`<ui-button style="flex:1;height:21px${n=='||'?';color:#c87832':''}">${n}</ui-button>`).join('')}</div>
<div class="row" style="height:27px;margin-top:10px"><ui-text w="30">Obiekt</ui-text><ui-field arrow m style="width:148px;height:22px;margin:0 8px 0 7px;padding-left:3px"><ui-text w="52">Operational</ui-text></ui-field><ui-button off style="width:28px;height:27px"><ui-icon n="prev" s="20"></ui-icon></ui-button><ui-button style="width:28px;height:27px;margin-left:7px"><ui-icon n="next" s="20"></ui-icon></ui-button></div>
<div class="row" style="height:27px;gap:7px"><ui-text w="41">Podgląd:</ui-text><ui-text w="83">406687.6828142059</ui-text></div></div><div class="grip"></div>
<div><div class="row" style="width:192px;gap:7px;height:22px"><ui-field style="width:105px;height:22px;padding-left:8px;color:#777"><ui-icon n="search" s="13"></ui-icon><ui-text w="38" style="margin-left:7px">Szukaj...</ui-text></ui-field><ui-button off style="width:80px;height:21px;color:#6f7f90"><ui-text w="61">Pokaż pomoc</ui-text></ui-button></div><function-tree style="margin-top:7px;font:12px 'Open Sans',sans-serif"></function-tree></div><div class="grip" style="justify-self:start;margin-left:3px"></div>
<div style="width:241px;height:375px;background:#fff;border:1px solid #b4b4b4"></div></div>
<div class="row" style="height:60px;margin-top:30px;padding-left:11px"><ui-icon n="bubble" s="32"></ui-icon><ui-text w="627" style="margin-left:39px">Edytujesz informacje w tej warstwie, ale nie znajduje się ona w trybie edycji. Jeśli klikniesz OK, zostanie automatycznie włączony tryb edycji.</ui-text></div>
<div class="row" style="justify-content:flex-end;gap:7px;margin-top:20px"><ui-button off style="width:80px;height:21px"><ui-text w="14">OK</ui-text></ui-button><ui-button style="width:80px;height:21px"><ui-text w="29">Anuluj</ui-text></ui-button><ui-button style="width:80px;height:21px"><ui-text w="32">Pomoc</ui-text></ui-button></div>
</div>`);
define('red-arrows',':host{position:absolute;inset:0}svg{display:block}','<svg width="1559" height="863" viewBox="0 0 1559 863" fill="none" stroke="#ed1c24" stroke-width="5.200" stroke-linecap="round" stroke-linejoin="round"><path d="M369.500 386L378 600 385.500 681M370 658L385.500 681 403 656M206 691L566 795.500 1252 647M244 687.500L206 691 210.500 721M1213 635.500L1251 646 1236 672"/></svg>');
const c=s=>s.split(' ').map(n=>n=='|'?'<tool-grip style="width:18px"></tool-grip>':n=='v'?'<ui-caret></ui-caret>':n=='/'?'<tool-sep></tool-sep>':n[0]=='!'?`<tool-cell on n="${n.slice(1)}"></tool-cell>`:`<tool-cell n="${n}"></tool-cell>`).join('');
define('qgis-app',`:host{display:flex;flex-direction:column;position:relative;width:1559px;height:863px;overflow:hidden}
.title{height:11px;background:#fff;color:#999;display:flex;align-items:flex-end;overflow:hidden;gap:9px}
.title ui-icon{margin-bottom:5px;margin-left:-1px}.title ui-text{line-height:16px;margin-bottom:1px}
main{display:flex;flex:1;min-height:0}aside{width:299px;display:flex;flex-direction:column;background:#efefef}aside>*{width:289px}aside{border-right:1px solid #b4b4b4}
.spl{height:7px;display:grid;place-items:center}.spl::before{content:"";width:17px;height:1px;background:repeating-linear-gradient(90deg,#aaa 0 1px,transparent 1px 3px)}
.map{flex:1;display:flex;flex-direction:column}.msg{height:36px;background:#ffc800;border-bottom:1px solid #e0a800;display:flex;justify-content:flex-end;align-items:center;padding-right:24px;font:9.500px "DejaVu Sans",sans-serif}
tool-bar{padding-left:3px}tool-bar tool-grip:first-child{width:8px!important;justify-content:start;padding-left:0}`,
`<div class="title"><ui-icon n="qgis" s="17"></ui-icon><ui-text w="138">Projekt bez nazwy — QGIS</ui-text></div><menu-bar></menu-bar>
<tool-bar style="height:39px">${c('| new open save layout layman style | !hand pansel zin zout zfull zsel zlay z11 zlast znext map mesh bm bms clock refresh | ident table abacus !gear sigma ruler v tip action v text v')}</tool-bar>
<tool-bar style="height:39px">${c('| dsm gpkgn shp spln mem / virt / | pens pen')}<i style="width:745px"></i>${c('python | help |')}</tool-bar>
<tool-bar style="height:39px">${c('| sel v selform v desel v selloc')}</tool-bar>
<main><aside><browser-panel></browser-panel><div class="spl"></div><layers-panel></layers-panel></aside><div class="map"><div class="msg"><ui-button style="width:80px;height:25px;padding-top:2px"><ui-text w="44">Szczegóły</ui-text></ui-button></div><map-canvas></map-canvas></div></main>
<attribute-window></attribute-window><calc-dialog></calc-dialog><red-arrows></red-arrows>`);
</script>
</body>
</html>
